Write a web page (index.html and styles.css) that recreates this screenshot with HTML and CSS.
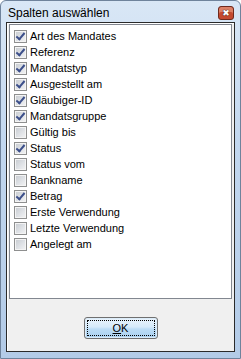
FILE: index.html
```html
<!DOCTYPE html>
<html lang="de">
<head>
    <meta charset="UTF-8" />
    <title>Spalten auswählen</title>
    <link rel="stylesheet" href="styles.css">
</head>
<body>
    <div class="window">
        <div class="titlebar">
            <span class="title">Spalten auswählen</span>
            <span class="close-btn">
                <span class="close-x">✖</span>
            </span>
        </div>
        <div class="client">
            <ul class="list">
                <li><span class="box checked"></span>Art des Mandates</li>
                <li><span class="box checked"></span>Referenz</li>
                <li><span class="box checked"></span>Mandatstyp</li>
                <li><span class="box checked"></span>Ausgestellt am</li>
                <li><span class="box checked"></span>Gläubiger-ID</li>
                <li><span class="box checked"></span>Mandatsgruppe</li>
                <li><span class="box"></span>Gültig bis</li>
                <li><span class="box checked"></span>Status</li>
                <li><span class="box"></span>Status vom</li>
                <li><span class="box"></span>Bankname</li>
                <li><span class="box checked"></span>Betrag</li>
                <li><span class="box"></span>Erste Verwendung</li>
                <li><span class="box"></span>Letzte Verwendung</li>
                <li><span class="box"></span>Angelegt am</li>
            </ul>
            <div class="actions">
                <button class="ok-btn"><span class="focus"><u>O</u>K</span></button>
            </div>
        </div>
    </div>
</body>
</html>
```

FILE: styles.css
```css
body {
    margin: 0;
    background: #fff;
    font-family: "Liberation Sans", Arial, sans-serif;
    font-size: 11px;
    color: #000;
}
.window {
    width: 241px;
    height: 359px;
    box-sizing: border-box;
    display: flex;
    flex-direction: column;
    padding: 0 5px 6px 5px;
    border: 1px solid #6f839c;
    border-radius: 6px 6px 0 0;
    background: linear-gradient(180deg, #d9e7f6 0%, #c2d7ef 40%, #b3cbe7 100%);
}
.titlebar {
    height: 21px;
    display: flex;
    align-items: center;
    justify-content: space-between;
    padding: 0 1px 0 2px;
}
.title {
    font-size: 12px;
    padding-top: 2px;
}
.close-btn {
    width: 16px;
    height: 14px;
    flex: none;
    margin-top: 3px;
    box-sizing: border-box;
    border: 1px solid #6e2a1e;
    border-radius: 3px;
    background: #c44a30;
    box-shadow: inset 0 5px 0 #dc8066;
    display: flex;
    align-items: center;
    justify-content: center;
}
.close-x {
    font-family: "DejaVu Sans", sans-serif;
    font-size: 9px;
    line-height: 1;
    color: #fff;
    text-shadow: 0 0 1px #3a1a12, 0 0 1px #3a1a12;
}
.client {
    flex: 1;
    display: flex;
    flex-direction: column;
    background: #f0f0f0;
    border: 1px solid #2a2a2a;
    box-shadow: inset 1px 1px 0 #fff;
}
.list {
    list-style: none;
    margin: 1px 2px 0 2px;
    padding: 3px 0 0 4px;
    height: 275px;
    box-sizing: border-box;
    background: #fff;
    border: 1px solid #828790;
}
.list li {
    height: 16px;
    display: flex;
    align-items: center;
    gap: 3px;
}
.box {
    width: 13px;
    height: 13px;
    box-sizing: border-box;
    border: 1px solid #8e8f8f;
    background: linear-gradient(135deg, #c6cacf 0%, #dfe2e6 55%, #f4f4f4 100%);
    box-shadow: inset 0 0 0 1px #f4f4f4;
    position: relative;
}
.box.checked::after {
    content: "";
    position: absolute;
    left: 3px;
    top: 0;
    width: 3px;
    height: 7px;
    border: solid #3c4f8a;
    border-width: 0 2px 2px 0;
    transform: rotate(40deg);
}
.actions {
    display: flex;
    justify-content: center;
    padding-top: 18px;
}
.ok-btn {
    width: 74px;
    height: 22px;
    padding: 2px;
    border: 1px solid #707070;
    border-radius: 3px;
    background: linear-gradient(180deg, #eaf4fc 0%, #d6eafa 45%, #bcdcf5 55%, #a9d0f0 100%);
    box-shadow: inset 0 0 0 1px #dcecf9;
    font-family: "Liberation Sans", Arial, sans-serif;
    font-size: 11px;
    color: #000;
}
.focus {
    display: flex;
    align-items: center;
    justify-content: center;
    height: 100%;
    box-sizing: border-box;
    border: 1px dotted #000;
}
```
